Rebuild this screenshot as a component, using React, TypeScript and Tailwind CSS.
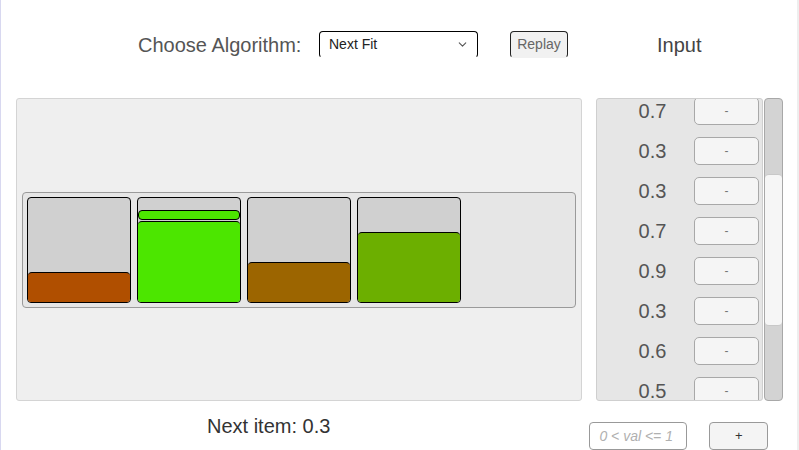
import { ChevronDown } from 'lucide-react';

type Item = { h: number; color: string };

const bins: Item[][] = [
  [{ h: 30, color: 'bg-[#b04f00]' }],
  [
    { h: 81, color: 'bg-[#4ce600]' },
    { h: 10, color: 'bg-[#4ce600]' },
  ],
  [{ h: 40, color: 'bg-[#9c6500]' }],
  [{ h: 70, color: 'bg-[#6caf00]' }],
];

const inputs = ['0.7', '0.3', '0.3', '0.7', '0.9', '0.3', '0.6', '0.5'];

export default function App() {
  return (
    <div
      className="w-[799px] h-[450px] bg-white overflow-hidden border-l border-l-[#d8d8f0] border-r-2 border-r-[#eeeeee] text-[#555]"
      style={{ fontFamily: '"Liberation Sans", Arial, sans-serif' }}
    >
      {/* header */}
      <div className="h-[98px] pt-[31px] flex items-start pl-[137px]">
        <div className="w-[181px] h-[27px] flex items-center text-[20px]">Choose Algorithm:</div>
        <div className="w-[159px] h-[27px] flex items-center justify-between pl-[9px] pr-[8px] border border-black border-b-transparent rounded-[4px] text-[14px] text-[#222] bg-white">
          <span>Next Fit</span>
          <ChevronDown size={13} strokeWidth={2} className="text-[#555]" />
        </div>
        <div className="ml-[32px] w-[58px] h-[27px] flex items-center justify-center border border-[#222] border-b-transparent rounded-[4px] bg-[#f1f1f1] text-[14px] text-[#666]">
          Replay
        </div>
        <div className="ml-[89px] h-[27px] flex items-center text-[20px] text-[#444]">Input</div>
      </div>

      {/* main row */}
      <div className="flex items-start">
        <div className="ml-[15px] w-[566px] h-[303px] bg-[#efefef] border border-[#d4d4d4] rounded-[3px] flex flex-col justify-center px-[5px]">
          <div className="h-[116px] bg-[#e6e6e6] border border-[#9a9a9a] rounded-[4px] flex gap-[6px] px-[4px] py-[4px]">
            {bins.map((items, i) => (
              <div
                key={i}
                className="w-[104px] h-[106px] bg-[#d0d0d0] border border-black rounded-[4px] flex flex-col-reverse gap-[1px] overflow-hidden"
              >
                {items.map((it, j) => (
                  <div
                    key={j}
                    className={`${it.color} border-t border-black rounded-t-[4px] ${j === 0 ? '' : 'border-x border-b rounded-[4px]'}`}
                    style={{ height: it.h }}
                  />
                ))}
              </div>
            ))}
          </div>
        </div>

        <div className="ml-[14px] w-[167px] h-[303px] bg-[#e6e6e6] border border-[#cfcfcf] rounded-[3px] overflow-hidden">
          <div className="-mt-[8px]">
            {inputs.map((v, i) => (
              <div key={i} className="h-[40px] flex items-center">
                <span className="w-[97px] pl-[14px] text-center text-[20px] text-[#555]">{v}</span>
                <div className="w-[65px] h-[28px] bg-[#f5f5f5] border border-[#a8a8a8] rounded-[5px] flex items-center justify-center text-[12px] text-[#777]">
                  -
                </div>
              </div>
            ))}
          </div>
        </div>

        <div className="ml-[1px] w-[19px] h-[303px] bg-[#d3d3d3] border border-[#a8a8a8] rounded-[4px] pt-[75px]">
          <div className="h-[152px] bg-[#f6f6f6] border-y border-[#c8c8c8] rounded-[4px]" />
        </div>
      </div>

      {/* bottom row */}
      <div className="flex items-start">
        <div className="ml-[206px] mt-[11px] h-[27px] flex items-center text-[20px] text-[#333]">Next item: 0.3</div>
        <div className="ml-[259px] mt-[21px] w-[98px] h-[28px] border border-[#999] rounded-[4px] bg-white flex items-center pl-[9px] text-[14px] italic text-[#b0b0b0]">
          0 &lt; val &lt;= 1
        </div>
        <div className="ml-[22px] mt-[21px] w-[59px] h-[28px] border border-[#999] rounded-[4px] bg-[#f4f4f4] flex items-center justify-center text-[13px] text-[#333]">
          +
        </div>
      </div>
    </div>
  );
}
